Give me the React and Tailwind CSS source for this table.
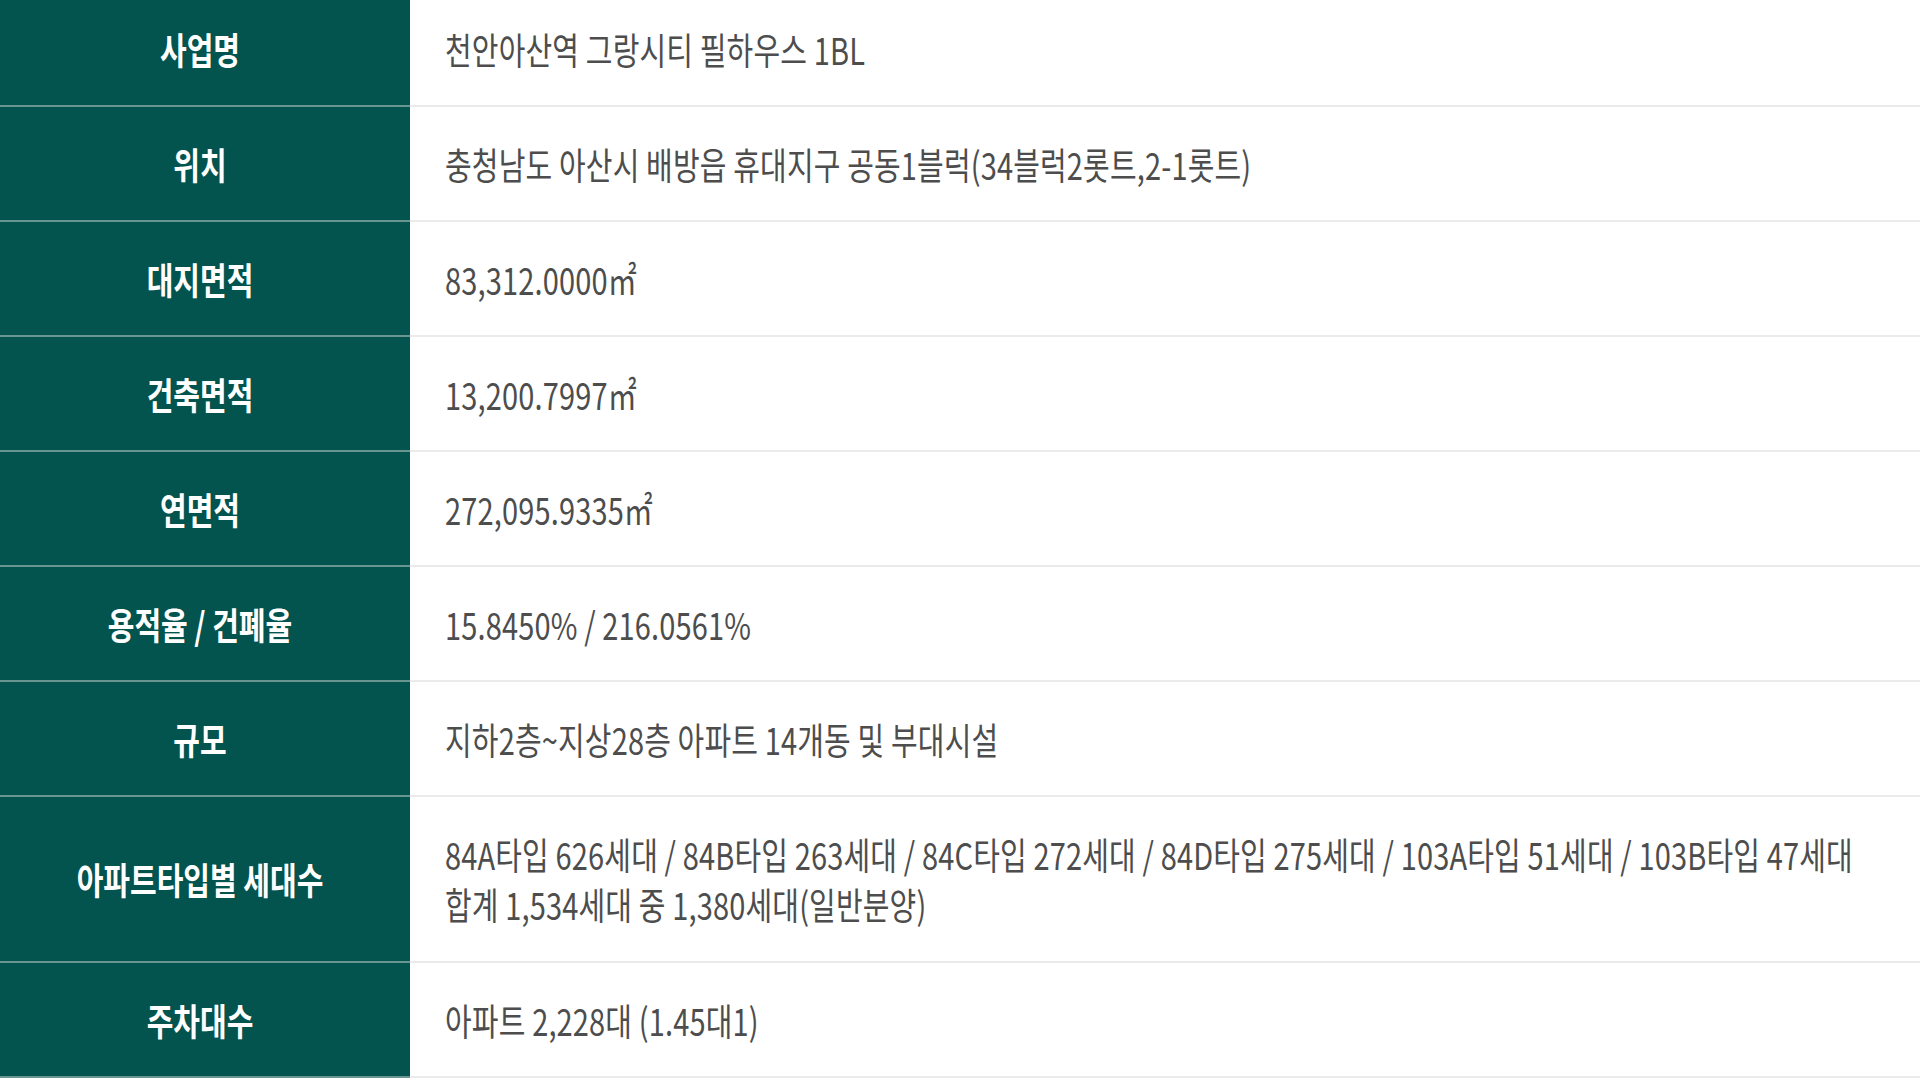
import React from 'react';

const rows = [
  { label: '사업명', value: ['천안아산역 그랑시티 필하우스 1BL'] },
  { label: '위치', value: ['충청남도 아산시 배방읍 휴대지구 공동1블럭(34블럭2롯트,2-1롯트)'] },
  { label: '대지면적', value: ['83,312.0000㎡'] },
  { label: '건축면적', value: ['13,200.7997㎡'] },
  { label: '연면적', value: ['272,095.9335㎡'] },
  { label: '용적율 / 건폐율', value: ['15.8450% / 216.0561%'] },
  { label: '규모', value: ['지하2층~지상28층 아파트 14개동 및 부대시설'] },
  {
    label: '아파트타입별 세대수',
    value: [
      '84A타입 626세대 / 84B타입 263세대 / 84C타입 272세대 / 84D타입 275세대 / 103A타입 51세대 / 103B타입 47세대',
      '합계 1,534세대 중 1,380세대(일반분양)',
    ],
  },
  { label: '주차대수', value: ['아파트 2,228대 (1.45대1)'] },
];

const App = () => {
  return (
    <div
      className="w-[1920px] h-[1080px] overflow-hidden bg-white"
      style={{ fontFamily: '"Noto Sans CJK KR", "Noto Sans", sans-serif' }}
    >
      <div className="mt-[-8px] flex flex-col">
        {rows.map(row => (
          <div
            key={row.label}
            className={`flex ${row.value.length > 1 ? 'h-[166px]' : 'h-[115px]'}`}
          >
            <div className="w-[410px] shrink-0 flex items-center justify-center pr-[10px] bg-[#03534e] border-b-2 border-[#6a9692]">
              <span className="text-white text-[29px] font-bold scale-y-[1.29] whitespace-nowrap">
                {row.label}
              </span>
            </div>
            <div className="flex-1 flex items-center pl-[35px] border-b-2 border-[#ebebeb]">
              <div className="text-[#4d4d4d] text-[29px] leading-[38.8px] tracking-[0.15px] scale-y-[1.29] origin-left">
                {row.value.map(line => (
                  <div key={line} className="whitespace-nowrap">{line}</div>
                ))}
              </div>
            </div>
          </div>
        ))}
      </div>
    </div>
  );
};

export default App;
